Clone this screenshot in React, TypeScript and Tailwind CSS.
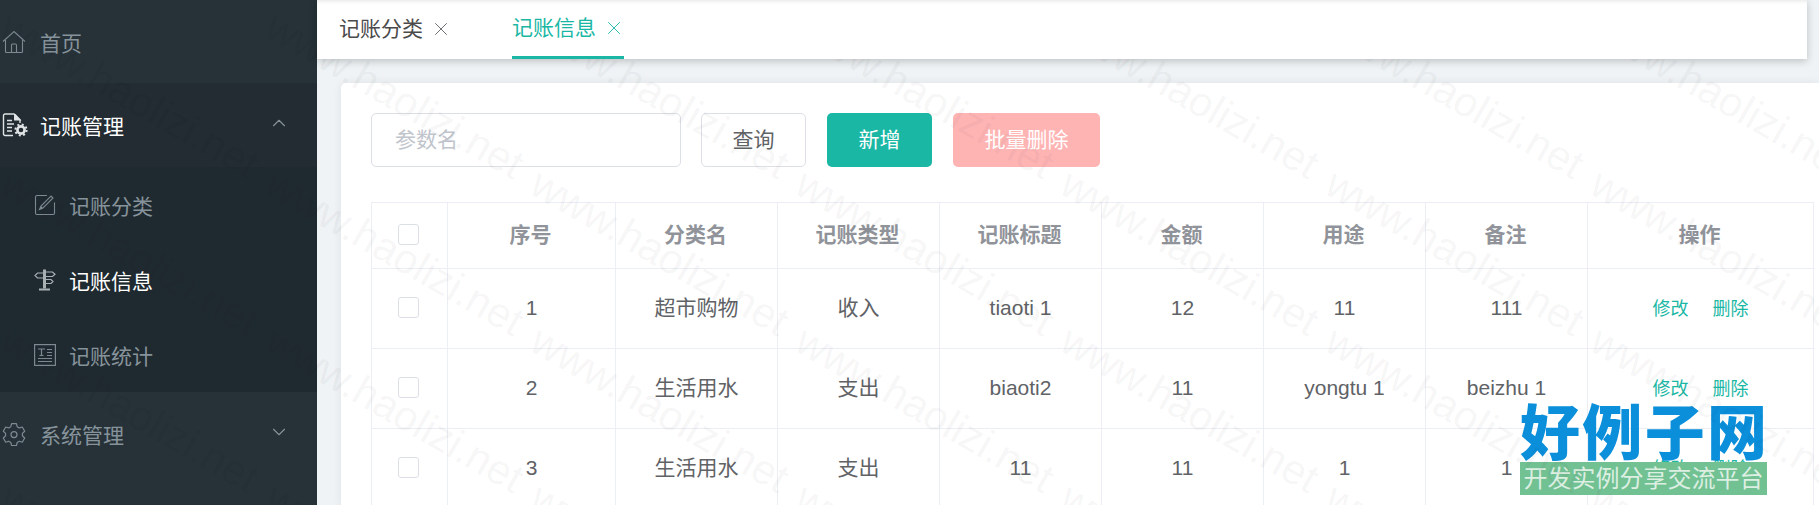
import { ChevronDown, ChevronUp, X } from "lucide-react";
import type { ReactNode } from "react";

const FONT = "font-['Liberation_Sans','Noto_Sans_CJK_SC',sans-serif]";

function HomeIcon() {
  return (
    <svg viewBox="0 0 24 24" className="size-[24px]" fill="none" stroke="currentColor" strokeWidth="1.1">
      <path d="M1 11.5 12 1.5l11 10" />
      <path d="M3.5 10v11.5a1 1 0 0 0 1 1h15a1 1 0 0 0 1-1V10" />
      <path d="M9.5 22.5V15a1 1 0 0 1 1-1h3a1 1 0 0 1 1 1v7.5" />
    </svg>
  );
}

function DocGearIcon() {
  return (
    <svg viewBox="0 0 26 24" className="h-[24px] w-[26px]" fill="none" stroke="currentColor" strokeWidth="1.4">
      <path d="M11 22.5H3a1.5 1.5 0 0 1-1.500-1.500V2.500A1.500 1.500 0 0 1 3 1h9l6 6v3" />
      <path d="M12 1h1.500l6 6.500H12z" fill="currentColor" stroke="none" />
      <path d="M5 7.500h5M5 11h7M5 14.500h5M5 18h5" />
      <circle cx="19" cy="17" r="3.600" strokeWidth="2.600" />
      <circle cx="19" cy="17" r="5.600" strokeWidth="2" strokeDasharray="2 2.400" />
    </svg>
  );
}

function EditIcon() {
  return (
    <svg viewBox="0 0 22 22" className="size-[22px]" fill="none" stroke="currentColor" strokeWidth="1.1">
      <path d="M13 1.500H3A1.500 1.500 0 0 0 1.500 3v16A1.500 1.500 0 0 0 3 20.500h16a1.500 1.500 0 0 0 1.500-1.500V8.500" />
      <path d="M5.500 15.500 7 12 17 2l2 2L9 14z" />
      <path d="M5.500 15.500 7 12l2 2z" fill="currentColor" stroke="none" />
    </svg>
  );
}

function GuideIcon() {
  return (
    <svg viewBox="0 0 22 22" className="size-[22px]" fill="none" stroke="currentColor" strokeWidth="1.2">
      <path d="M9 .5h3v19H9z" fill="currentColor" stroke="none" />
      <path d="M5 19.500h11v2H5z" fill="currentColor" stroke="none" />
      <path d="M9 4H3.500L1 6.500 3.500 9H9" />
      <path d="M12 3h6.500L21 5.200 18.500 7.500H12" />
      <path d="M12 10.500h5l2 2-2 2h-5" />
    </svg>
  );
}

function NewsIcon() {
  return (
    <svg viewBox="0 0 22 22" className="size-[22px]" fill="none" stroke="currentColor" strokeWidth="1.2">
      <rect x="0.600" y="0.600" width="20.800" height="20.800" />
      <path d="M4 5h7M7.500 5v6.500M5.500 11.500h4M13 5.500h5M13 8.500h5M13 11.500h5M4 14.500h14M4 17.500h14" />
    </svg>
  );
}

function GearIcon() {
  return (
    <svg viewBox="0 0 24 24" className="size-[24px]" fill="none" stroke="currentColor" strokeWidth="1.2">
      <path d="M9.600 1.600h4.800l.8 3.100 2.100 1.200 3-.9 2.400 4.200-2.300 2.200v2.400l2.300 2.200-2.400 4.200-3-.9-2.100 1.200-.8 3.100H9.600l-.8-3.100-2.100-1.200-3 .9L1.300 16l2.300-2.200v-2.400L1.300 9.200l2.400-4.200 3 .9 2.100-1.200z" strokeLinejoin="round" />
      <circle cx="12" cy="12.600" r="3" />
    </svg>
  );
}

function MenuRow({
  icon,
  label,
  arrow,
  active,
  className,
}: {
  icon: ReactNode;
  label: string;
  arrow?: ReactNode;
  active?: boolean;
  className: string;
}) {
  return (
    <div className={`flex items-center text-[21px] ${active ? "text-white" : "text-[#87939b]"} ${className}`}>
      <span className={`flex w-[40px] shrink-0 items-center pl-[2px] ${active ? "text-[#dfe3e5]" : "text-[#7d8a92]"}`}>{icon}</span>
      <span className="pt-[4px]">{label}</span>
      {arrow ? <span className="mb-[4px] ml-auto mr-[27px] text-[#87939b]">{arrow}</span> : null}
    </div>
  );
}

function SubRow({ icon, label, active }: { icon: ReactNode; label: string; active?: boolean }) {
  return (
    <div className={`flex h-[75px] items-center pl-[34px] text-[21px] ${active ? "text-white" : "text-[#87939b]"}`}>
      <span className={`w-[35px] shrink-0 ${active ? "text-[#a9b0b4]" : "text-[#7d8a92]"}`}>{icon}</span>
      <span className="pt-[5px]">{label}</span>
    </div>
  );
}

function Sidebar() {
  return (
    <aside className="flex w-[317px] shrink-0 flex-col bg-[#263238]">
      <MenuRow icon={<HomeIcon />} label="首页" className="h-[83px]" />
      <MenuRow
        icon={<DocGearIcon />}
        label="记账管理"
        active
        arrow={<ChevronUp size={22} strokeWidth={1.2} />}
        className="h-[84px] bg-[#222c32]"
      />
      <div className="bg-[#1f2a30]">
        <SubRow icon={<EditIcon />} label="记账分类" />
        <SubRow icon={<GuideIcon />} label="记账信息" active />
        <SubRow icon={<NewsIcon />} label="记账统计" />
      </div>
      <MenuRow icon={<GearIcon />} label="系统管理" arrow={<ChevronDown size={22} strokeWidth={1.2} />} className="h-[84px]" />
    </aside>
  );
}

function Tabs() {
  return (
    <div className="relative z-10 mr-[12px] flex h-[59px] shrink-0 bg-white pl-[22px] text-[21px] shadow-[0_2px_8px_rgba(0,0,0,0.22),inset_0_4px_4px_-3px_rgba(0,0,0,0.1)]">
      <div className="flex h-full w-[173px] items-center pb-[2px] text-[#4a4a4a]">
        记账分类
        <X size={22} strokeWidth={1} className="ml-[7px] text-[#606266]" />
      </div>
      <div className="flex h-full w-[112px] items-center whitespace-nowrap border-b-[3px] border-[#1ab7a4] text-[#1ab7a4]">
        记账信息
        <X size={22} strokeWidth={1} className="ml-[7px] shrink-0" />
      </div>
    </div>
  );
}

type RowData = { id: number; cat: string; kind: string; title: string; amount: string; usage: string; note: string };

const rows: RowData[] = [
  { id: 1, cat: "超市购物", kind: "收入", title: "tiaoti 1", amount: "12", usage: "11", note: "111" },
  { id: 2, cat: "生活用水", kind: "支出", title: "biaoti2", amount: "11", usage: "yongtu 1", note: "beizhu 1" },
  { id: 3, cat: "生活用水", kind: "支出", title: "11", amount: "11", usage: "1", note: "1" },
];

const headers = ["序号", "分类名", "记账类型", "记账标题", "金额", "用途", "备注", "操作"];

function Checkbox() {
  return <span className="mx-auto block size-[21px] -translate-x-[1px] rounded-[3px] border border-[#dcdfe6] bg-white" />;
}

function DataTable() {
  const cell = "border border-[#ebeef5] pb-[2px] text-center";
  return (
    <table className="mt-[35px] w-[1442px] table-fixed border-collapse text-[21px] text-[#606266]">
      <colgroup>
        <col className="w-[76px]" />
        <col className="w-[168px]" />
        <col className="w-[162px]" />
        <col className="w-[162px]" />
        <col className="w-[162px]" />
        <col className="w-[162px]" />
        <col className="w-[162px]" />
        <col className="w-[162px]" />
        <col className="w-[226px]" />
      </colgroup>
      <thead>
        <tr className="h-[66px]">
          <th className={cell}>
            <Checkbox />
          </th>
          {headers.map((h) => (
            <th key={h} className={`${cell} font-bold text-[#909399]`}>
              <span className="relative -left-[1px]">{h}</span>
            </th>
          ))}
        </tr>
      </thead>
      <tbody>
        {rows.map((r) => (
          <tr key={r.id} className="h-[80px]">
            <td className={cell}>
              <Checkbox />
            </td>
            <td className={cell}>{r.id}</td>
            <td className={cell}>{r.cat}</td>
            <td className={cell}>{r.kind}</td>
            <td className={cell}>{r.title}</td>
            <td className={cell}>{r.amount}</td>
            <td className={cell}>{r.usage}</td>
            <td className={cell}>{r.note}</td>
            <td className="border border-[#ebeef5] pt-[2px] text-center text-[18px] text-[#1ab7a4]">
              <span>修改</span>
              <span className="ml-[24px]">删除</span>
            </td>
          </tr>
        ))}
      </tbody>
    </table>
  );
}

function Toolbar() {
  return (
    <div className="flex items-center">
      <div className="flex h-[54px] w-[310px] items-center rounded-[5px] border border-[#dcdfe6] pl-[23px] text-[21px] text-[#c0c4cc]">
        参数名
      </div>
      <button type="button" className="ml-[20px] h-[54px] w-[105px] rounded-[5px] border border-[#dcdfe6] text-[21px] text-[#606266]">
        查询
      </button>
      <button type="button" className="ml-[21px] h-[54px] w-[105px] rounded-[5px] bg-[#1ab7a4] text-[21px] text-white">
        新增
      </button>
      <button type="button" className="ml-[21px] h-[54px] w-[147px] rounded-[5px] bg-[#ffb4b4] text-[21px] text-white">
        批量删除
      </button>
    </div>
  );
}

function Watermarks() {
  const cells = Array.from({ length: 36 });
  return (
    <div className="pointer-events-none absolute inset-0 grid grid-cols-[repeat(7,265px)] auto-rows-[157px] overflow-hidden pl-[15px] pt-[5px]">
      {cells.map((_, i) => (
        <div key={i} className="relative h-[157px] w-[265px]">
          <span className="block w-max origin-top-left rotate-[30deg] font-['Liberation_Sans',sans-serif] text-[42px] leading-none text-black/[0.055]">
            www.haolizi.net
          </span>
        </div>
      ))}
    </div>
  );
}

function SiteLogo() {
  return (
    <div className="pointer-events-none absolute left-[1520px] top-[398px] w-[247px]">
      <div className="flex h-[62px] justify-between font-['Noto_Sans_CJK_SC',sans-serif] text-[60px] font-black leading-[62px] text-[#0b8fdb]">
        <span>好</span>
        <span>例</span>
        <span>子</span>
        <span>网</span>
      </div>
      <div className="mt-[2px] flex h-[33px] items-center justify-center whitespace-nowrap bg-[#72c193] text-[24px] leading-none text-[#dcefe2]">
        开发实例分享交流平台
      </div>
    </div>
  );
}

export default function App() {
  return (
    <div className={`relative flex h-[505px] w-[1819px] overflow-hidden bg-[#eff3f5] ${FONT}`}>
      <Sidebar />
      <main className="flex min-w-0 flex-1 flex-col">
        <Tabs />
        <section className="ml-[24px] mt-[24px] flex-1 rounded-tl-[5px] bg-white pl-[30px] pt-[30px] shadow-[0_0_10px_rgba(0,0,0,0.07)]">
          <Toolbar />
          <DataTable />
        </section>
      </main>
      <SiteLogo />
      <Watermarks />
    </div>
  );
}
